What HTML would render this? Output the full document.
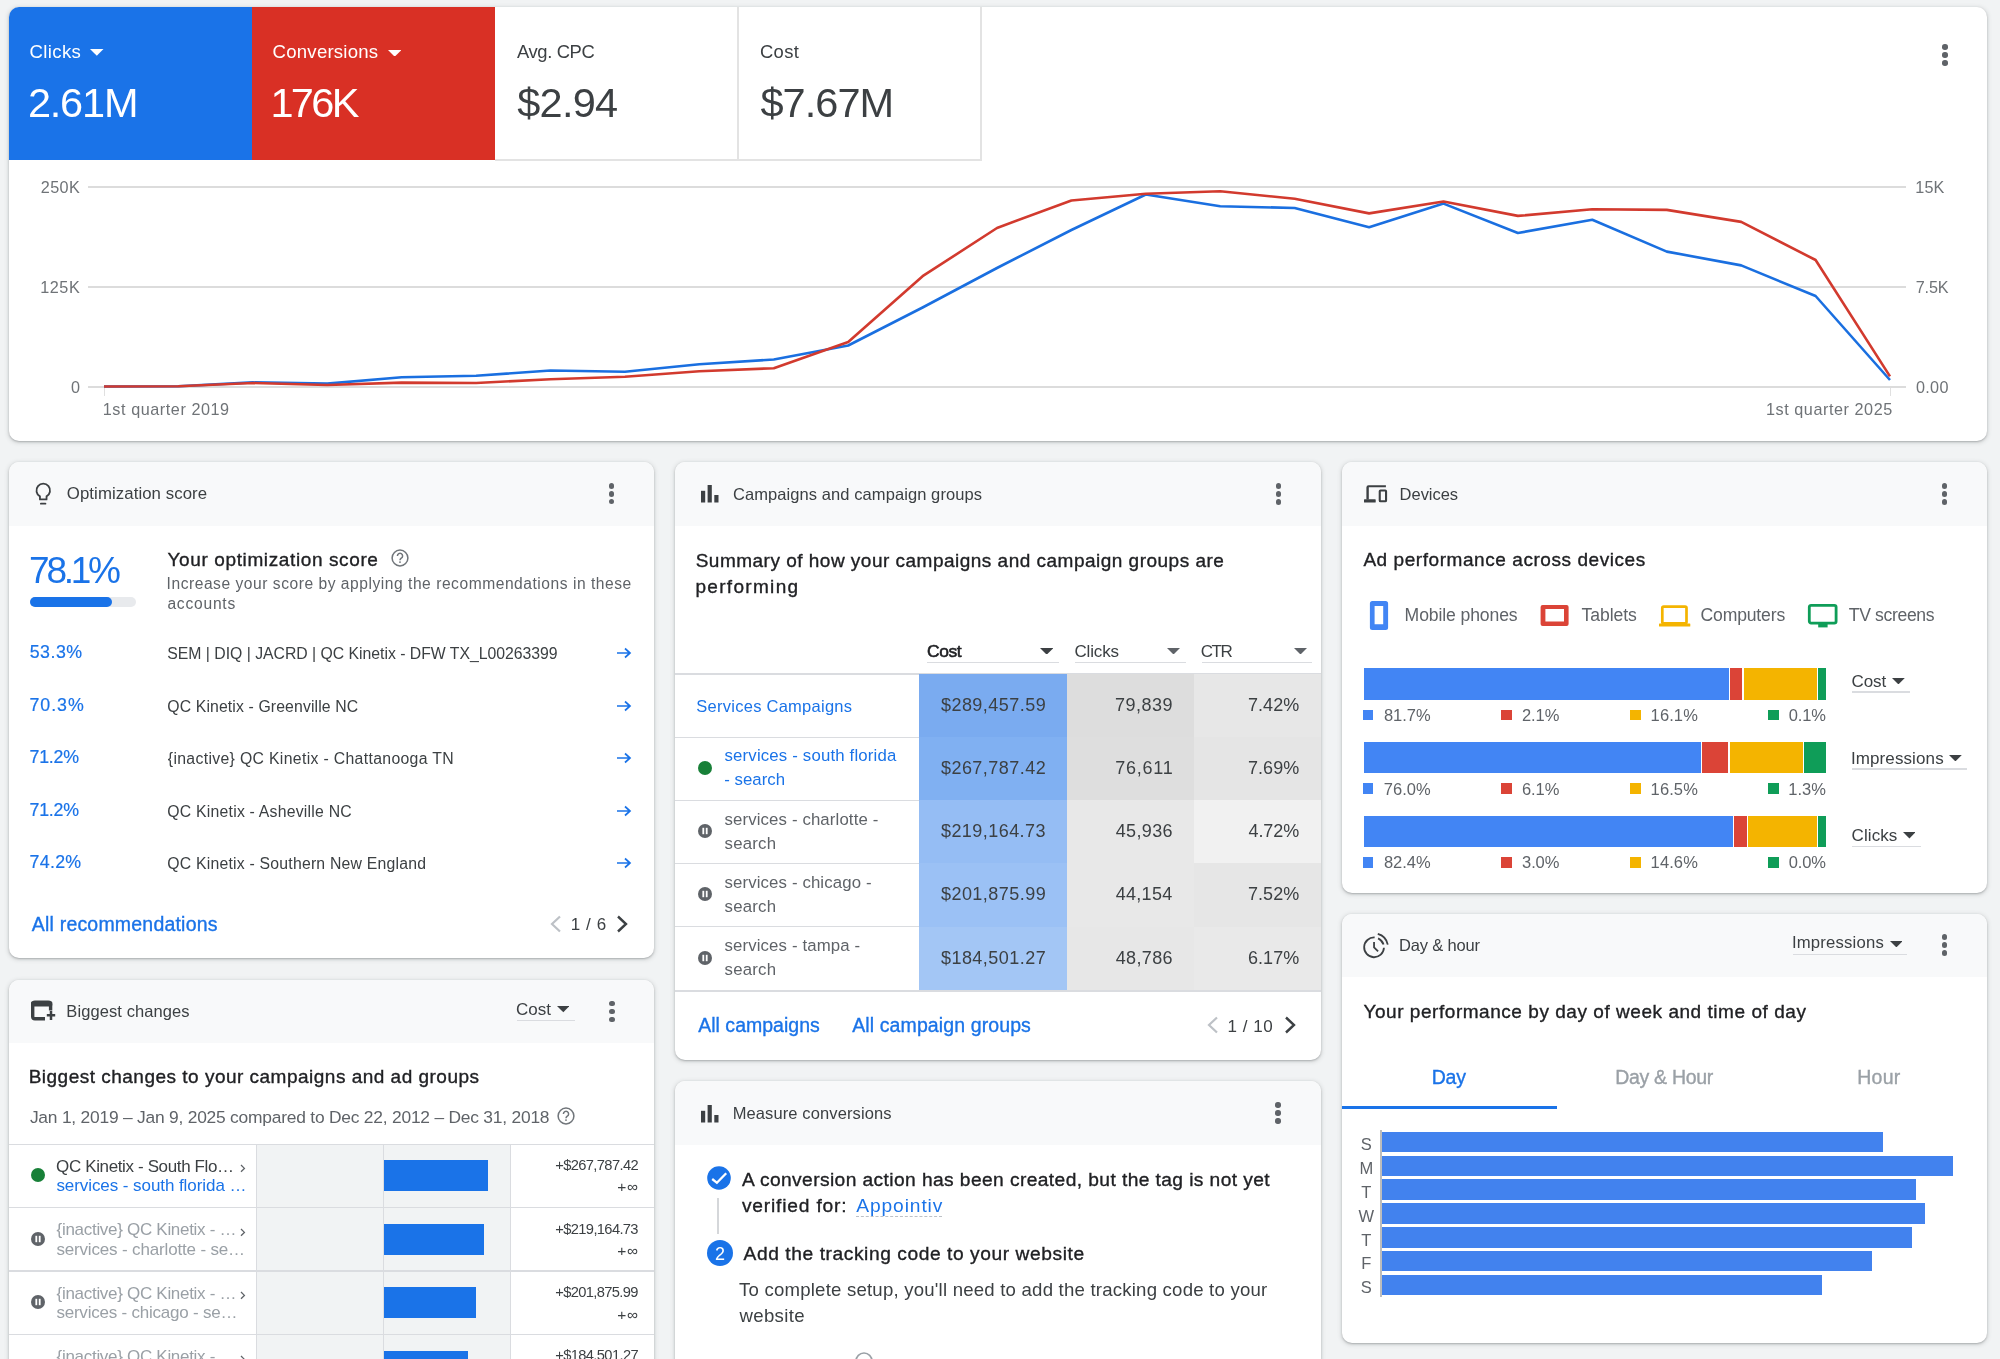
<!DOCTYPE html><html><head><meta charset="utf-8"><style>
html,body{margin:0;padding:0;width:2000px;height:1359px;overflow:hidden;background:#f1f3f4;font-family:'Liberation Sans', sans-serif}
.t{position:absolute;line-height:1;white-space:nowrap}
#tl{position:absolute;left:0;top:0;width:2000px;height:1359px;will-change:transform;pointer-events:none}
.r{position:absolute}
.card{position:absolute;background:#fff;border-radius:10px;box-shadow:0 1px 2px 0 rgba(60,64,67,.3),0 1px 4px 1px rgba(60,64,67,.15)}
</style></head><body>
<div class="card" style="left:9px;top:7px;width:1978px;height:434px;"></div>
<div class="r" style="left:9.0px;top:7.0px;width:243.0px;height:153.0px;background:#1a73e8;border-top-left-radius:10px"></div>
<div class="r" style="left:252.0px;top:7.0px;width:243.0px;height:153.0px;background:#d93025;"></div>
<div class="r" style="left:495.0px;top:159.0px;width:486.0px;height:1.5px;background:#e3e3e3;"></div>
<div class="r" style="left:737.0px;top:7.0px;width:1.5px;height:153.0px;background:#e3e3e3;"></div>
<div class="r" style="left:980.0px;top:7.0px;width:1.5px;height:153.5px;background:#e3e3e3;"></div>
<svg class="r" style="left:90.0px;top:49.0px" width="13.5" height="6.8" viewBox="0 0 13.5 6.8"><path d="M0 0H13.5L6.8 6.8Z" fill="#fff"/></svg>
<svg class="r" style="left:387.6px;top:49.5px" width="13.4" height="6.7" viewBox="0 0 13.4 6.7"><path d="M0 0H13.4L6.7 6.7Z" fill="#fff"/></svg>
<div class="r" style="left:1942.1px;top:44.2px;width:5.6px;height:5.6px;border-radius:50%;background:#5f6368"></div>
<div class="r" style="left:1942.1px;top:52.1px;width:5.6px;height:5.6px;border-radius:50%;background:#5f6368"></div>
<div class="r" style="left:1942.1px;top:60.0px;width:5.6px;height:5.6px;border-radius:50%;background:#5f6368"></div>
<div class="r" style="left:88.0px;top:186.4px;width:1818.0px;height:1.2px;background:#dcdcdc;"></div>
<div class="r" style="left:88.0px;top:286.4px;width:1818.0px;height:1.2px;background:#dcdcdc;"></div>
<div class="r" style="left:88.0px;top:386.4px;width:1818.0px;height:1.2px;background:#dcdcdc;"></div>
<div class="r" style="left:103.5px;top:388.0px;width:1.5px;height:8.0px;background:#e0e0e0;"></div>
<div class="r" style="left:1889.5px;top:388.0px;width:1.5px;height:8.0px;background:#e0e0e0;"></div>
<svg class="r" style="left:0.0px;top:0.0px" width="2000" height="450" viewBox="0 0 2000 450"><polyline points="104.0,386.5 178.4,386.3 252.8,382.4 327.2,383.6 401.7,377.3 476.1,375.8 550.5,370.5 624.9,371.8 699.3,364.2 773.8,359.5 848.2,345.5 922.6,307.5 997.0,268.0 1071.4,230.0 1145.8,194.5 1220.2,206.2 1294.7,208.0 1369.1,227.3 1443.5,203.6 1517.9,233.0 1592.3,219.8 1666.8,251.6 1741.2,265.4 1815.6,296.0 1890.0,380.0" fill="none" stroke="#1a6fe0" stroke-width="2.6" stroke-linejoin="round"/><polyline points="104.0,386.5 178.4,386.3 252.8,383.0 327.2,385.0 401.7,382.6 476.1,383.0 550.5,379.2 624.9,376.8 699.3,371.2 773.8,368.2 848.2,342.0 922.6,276.2 997.0,228.0 1071.4,200.5 1145.8,193.8 1220.2,191.2 1294.7,198.8 1369.1,213.4 1443.5,201.5 1517.9,215.9 1592.3,209.3 1666.8,209.9 1741.2,221.9 1815.6,260.0 1890.0,376.4" fill="none" stroke="#d23a2e" stroke-width="2.6" stroke-linejoin="round"/></svg>
<div class="card" style="left:9px;top:462px;width:645px;height:496px;"></div>
<div class="r" style="left:9px;top:462px;width:645px;height:64px;background:#f8f9fa;border-radius:10px 10px 0 0"></div>
<svg class="r" style="left:33.0px;top:482.0px" width="20" height="24" viewBox="0 0 20 24"><path d="M6.95 17.4V14.4A6.8 6.8 0 1 1 13.55 14.4V17.4Z" fill="none" stroke="#3c4043" stroke-width="1.8" stroke-linejoin="round"/><rect x="7" y="20.7" width="6.3" height="1.9" rx="0.9" fill="#3c4043"/></svg>
<div class="r" style="left:609.1px;top:483.3px;width:5.4px;height:5.4px;border-radius:50%;background:#5f6368"></div>
<div class="r" style="left:609.1px;top:491.2px;width:5.4px;height:5.4px;border-radius:50%;background:#5f6368"></div>
<div class="r" style="left:609.1px;top:499.1px;width:5.4px;height:5.4px;border-radius:50%;background:#5f6368"></div>
<div class="r" style="left:30.0px;top:597.0px;width:105.6px;height:10.4px;background:#e8eaed;border-radius:6px"></div>
<div class="r" style="left:30.0px;top:597.0px;width:82.4px;height:10.4px;background:#1a73e8;border-radius:6px"></div>
<svg class="r" style="left:390.5px;top:548.8px" width="18" height="18" viewBox="0 0 18 18"><circle cx="9" cy="9" r="7.9" fill="none" stroke="#70757a" stroke-width="1.5"/><path d="M6.4 6.9a2.6 2.6 0 1 1 3.9 2.3c-.8.6-1.3 1-1.3 2" fill="none" stroke="#70757a" stroke-width="1.5"/><circle cx="9" cy="13.1" r="0.95" fill="#70757a"/></svg>
<svg class="r" style="left:616.0px;top:647.2px" width="16" height="12" viewBox="0 0 16 12"><path d="M1 6H14M9 1.5L14 6L9 10.5" fill="none" stroke="#1a73e8" stroke-width="1.7"/></svg>
<svg class="r" style="left:616.0px;top:699.8px" width="16" height="12" viewBox="0 0 16 12"><path d="M1 6H14M9 1.5L14 6L9 10.5" fill="none" stroke="#1a73e8" stroke-width="1.7"/></svg>
<svg class="r" style="left:616.0px;top:752.3px" width="16" height="12" viewBox="0 0 16 12"><path d="M1 6H14M9 1.5L14 6L9 10.5" fill="none" stroke="#1a73e8" stroke-width="1.7"/></svg>
<svg class="r" style="left:616.0px;top:804.9px" width="16" height="12" viewBox="0 0 16 12"><path d="M1 6H14M9 1.5L14 6L9 10.5" fill="none" stroke="#1a73e8" stroke-width="1.7"/></svg>
<svg class="r" style="left:616.0px;top:857.4px" width="16" height="12" viewBox="0 0 16 12"><path d="M1 6H14M9 1.5L14 6L9 10.5" fill="none" stroke="#1a73e8" stroke-width="1.7"/></svg>
<svg class="r" style="left:549.0px;top:915.0px" width="13" height="18" viewBox="0 0 13 18"><path d="M11 1.5L3 9L11 16.5" fill="none" stroke="#bdc1c6" stroke-width="2.2"/></svg>
<svg class="r" style="left:616.0px;top:915.0px" width="13" height="18" viewBox="0 0 13 18"><path d="M2 1.5L10 9L2 16.5" fill="none" stroke="#3c4043" stroke-width="2.4"/></svg>
<div class="card" style="left:675px;top:462px;width:646px;height:598px;"></div>
<div class="r" style="left:675px;top:462px;width:646px;height:64px;background:#f8f9fa;border-radius:10px 10px 0 0"></div>
<svg class="r" style="left:701.0px;top:485.0px" width="20" height="20" viewBox="0 0 20 20"><rect x="0" y="5.8" width="4.2" height="11.7" fill="#3c4043"/><rect x="6.6" y="0" width="4.2" height="17.5" fill="#3c4043"/><rect x="13.3" y="10" width="4.2" height="7.5" fill="#3c4043"/></svg>
<div class="r" style="left:1275.7px;top:483.4px;width:5.4px;height:5.4px;border-radius:50%;background:#5f6368"></div>
<div class="r" style="left:1275.7px;top:491.3px;width:5.4px;height:5.4px;border-radius:50%;background:#5f6368"></div>
<div class="r" style="left:1275.7px;top:499.2px;width:5.4px;height:5.4px;border-radius:50%;background:#5f6368"></div>
<div class="r" style="left:927.4px;top:661.5px;width:131.2px;height:1.5px;background:#dadce0;"></div>
<svg class="r" style="left:1040.0px;top:647.6px" width="13.4" height="6.7" viewBox="0 0 13.4 6.7"><path d="M0 0H13.4L6.7 6.7Z" fill="#3c4043"/></svg>
<div class="r" style="left:1074.6px;top:661.5px;width:111.0px;height:1.5px;background:#dadce0;"></div>
<svg class="r" style="left:1167.0px;top:647.6px" width="13.0" height="6.5" viewBox="0 0 13.0 6.5"><path d="M0 0H13.0L6.5 6.5Z" fill="#5f6368"/></svg>
<div class="r" style="left:1201.6px;top:661.5px;width:110.4px;height:1.5px;background:#dadce0;"></div>
<svg class="r" style="left:1294.0px;top:647.6px" width="13.0" height="6.5" viewBox="0 0 13.0 6.5"><path d="M0 0H13.0L6.5 6.5Z" fill="#5f6368"/></svg>
<div class="r" style="left:675.0px;top:673.0px;width:646.0px;height:1.5px;background:#dadce0;"></div>
<div class="r" style="left:919.2px;top:674.0px;width:147.5px;height:63.2px;background:#7aabf0;"></div>
<div class="r" style="left:1066.7px;top:674.0px;width:127.0px;height:63.2px;background:#dddddd;"></div>
<div class="r" style="left:1193.7px;top:674.0px;width:127.3px;height:63.2px;background:#e7e7e7;"></div>
<div class="r" style="left:675.0px;top:736.5px;width:244.2px;height:1.4px;background:#dadce0;"></div>
<div class="r" style="left:919.2px;top:737.2px;width:147.5px;height:63.2px;background:#80b0f2;"></div>
<div class="r" style="left:1066.7px;top:737.2px;width:127.0px;height:63.2px;background:#dedede;"></div>
<div class="r" style="left:1193.7px;top:737.2px;width:127.3px;height:63.2px;background:#e5e5e5;"></div>
<div class="r" style="left:675.0px;top:799.7px;width:244.2px;height:1.4px;background:#dadce0;"></div>
<div class="r" style="left:919.2px;top:800.4px;width:147.5px;height:63.0px;background:#95bdf4;"></div>
<div class="r" style="left:1066.7px;top:800.4px;width:127.0px;height:63.0px;background:#e8e8e8;"></div>
<div class="r" style="left:1193.7px;top:800.4px;width:127.3px;height:63.0px;background:#f1f1f1;"></div>
<div class="r" style="left:675.0px;top:862.7px;width:244.2px;height:1.4px;background:#dadce0;"></div>
<div class="r" style="left:919.2px;top:863.4px;width:147.5px;height:63.2px;background:#9bc1f5;"></div>
<div class="r" style="left:1066.7px;top:863.4px;width:127.0px;height:63.2px;background:#e8e8e8;"></div>
<div class="r" style="left:1193.7px;top:863.4px;width:127.3px;height:63.2px;background:#e6e6e6;"></div>
<div class="r" style="left:675.0px;top:925.9px;width:244.2px;height:1.4px;background:#dadce0;"></div>
<div class="r" style="left:919.2px;top:926.6px;width:147.5px;height:64.0px;background:#a3c6f5;"></div>
<div class="r" style="left:1066.7px;top:926.6px;width:127.0px;height:64.0px;background:#e7e7e7;"></div>
<div class="r" style="left:1193.7px;top:926.6px;width:127.3px;height:64.0px;background:#e9e9e9;"></div>
<div class="r" style="left:675.0px;top:990.0px;width:646.0px;height:1.5px;background:#dadce0;"></div>
<div class="r" style="left:698.0px;top:761.0px;width:14px;height:14px;border-radius:50%;background:#188038"></div>
<svg class="r" style="left:698.0px;top:824.2px" width="14" height="14" viewBox="0 0 14 14"><circle cx="7.0" cy="7.0" r="7.0" fill="#5f6368"/><rect x="4.4" y="3.8" width="1.8" height="6.4" fill="#fff"/><rect x="7.8" y="3.8" width="1.8" height="6.4" fill="#fff"/></svg>
<svg class="r" style="left:698.0px;top:887.4px" width="14" height="14" viewBox="0 0 14 14"><circle cx="7.0" cy="7.0" r="7.0" fill="#5f6368"/><rect x="4.4" y="3.8" width="1.8" height="6.4" fill="#fff"/><rect x="7.8" y="3.8" width="1.8" height="6.4" fill="#fff"/></svg>
<svg class="r" style="left:698.0px;top:950.6px" width="14" height="14" viewBox="0 0 14 14"><circle cx="7.0" cy="7.0" r="7.0" fill="#5f6368"/><rect x="4.4" y="3.8" width="1.8" height="6.4" fill="#fff"/><rect x="7.8" y="3.8" width="1.8" height="6.4" fill="#fff"/></svg>
<svg class="r" style="left:1205.5px;top:1016.0px" width="13" height="18" viewBox="0 0 13 18"><path d="M11 1.5L3 9L11 16.5" fill="none" stroke="#bdc1c6" stroke-width="2.2"/></svg>
<svg class="r" style="left:1283.5px;top:1016.0px" width="13" height="18" viewBox="0 0 13 18"><path d="M2 1.5L10 9L2 16.5" fill="none" stroke="#3c4043" stroke-width="2.4"/></svg>
<div class="card" style="left:1342px;top:462px;width:645px;height:431px;"></div>
<div class="r" style="left:1342px;top:462px;width:645px;height:64px;background:#f8f9fa;border-radius:10px 10px 0 0"></div>
<svg class="r" style="left:1362.0px;top:483.0px" width="28" height="22" viewBox="0 0 28 22"><path d="M4.4 16.6V4.6Q4.4 2.2 6.6 2.2H23.9V4.3H6.8V16.6Z" fill="#3c4043"/><rect x="2" y="16.3" width="11.7" height="3.3" rx="0.6" fill="#3c4043"/><rect x="17.75" y="7.45" width="6.3" height="10.8" rx="0.8" fill="none" stroke="#3c4043" stroke-width="2.1"/></svg>
<div class="r" style="left:1941.9px;top:483.4px;width:5.4px;height:5.4px;border-radius:50%;background:#5f6368"></div>
<div class="r" style="left:1941.9px;top:491.3px;width:5.4px;height:5.4px;border-radius:50%;background:#5f6368"></div>
<div class="r" style="left:1941.9px;top:499.2px;width:5.4px;height:5.4px;border-radius:50%;background:#5f6368"></div>
<svg class="r" style="left:1369.0px;top:600.0px" width="21" height="31" viewBox="0 0 21 31"><path fill-rule="evenodd" fill="#4285f4" d="M3.4 1H16.6A2.5 2.5 0 0 1 19.1 3.5V27.4A2.5 2.5 0 0 1 16.6 29.9H3.4A2.5 2.5 0 0 1 0.9 27.4V3.5A2.5 2.5 0 0 1 3.4 1ZM5.6 6V24.2H14.2V6Z"/></svg>
<svg class="r" style="left:1540.0px;top:604.0px" width="30" height="23" viewBox="0 0 30 23"><path fill-rule="evenodd" fill="#db4437" d="M2.6 0.9H26.6A2 2 0 0 1 28.6 2.9V20A2 2 0 0 1 26.6 22H2.6A2 2 0 0 1 0.6 20V2.9A2 2 0 0 1 2.6 0.9ZM5.4 5V17.4H24V5Z"/></svg>
<svg class="r" style="left:1658.0px;top:603.5px" width="33" height="24" viewBox="0 0 33 24"><rect x="4.3" y="2.7" width="24.2" height="16.6" rx="1.4" fill="none" stroke="#f4b400" stroke-width="2.7"/><rect x="1" y="19.5" width="31.3" height="3" rx="0.5" fill="#f4b400"/></svg>
<svg class="r" style="left:1806.5px;top:603.0px" width="32" height="26" viewBox="0 0 32 26"><rect x="2.3" y="2.3" width="26.8" height="17.8" rx="1.8" fill="none" stroke="#0f9d58" stroke-width="2.8"/><rect x="11.2" y="21" width="9.4" height="3.4" fill="#0f9d58"/></svg>
<div class="r" style="left:1364.4px;top:668.2px;width:364.2px;height:31.4px;background:#4285f4;"></div>
<div class="r" style="left:1730.2px;top:668.2px;width:12.1px;height:31.4px;background:#db4437;"></div>
<div class="r" style="left:1743.9px;top:668.2px;width:72.7px;height:31.4px;background:#f4b400;"></div>
<div class="r" style="left:1818.2px;top:668.2px;width:7.6px;height:31.4px;background:#0f9d58;"></div>
<div class="r" style="left:1362.8px;top:709.8px;width:10.6px;height:10.6px;background:#4285f4;"></div>
<div class="r" style="left:1501.4px;top:709.8px;width:10.6px;height:10.6px;background:#db4437;"></div>
<div class="r" style="left:1630.0px;top:709.8px;width:10.6px;height:10.6px;background:#f4b400;"></div>
<div class="r" style="left:1768.2px;top:709.8px;width:10.6px;height:10.6px;background:#0f9d58;"></div>
<div class="r" style="left:1364.4px;top:742.2px;width:336.3px;height:31.3px;background:#4285f4;"></div>
<div class="r" style="left:1702.3px;top:742.2px;width:25.9px;height:31.3px;background:#db4437;"></div>
<div class="r" style="left:1729.8px;top:742.2px;width:73.0px;height:31.3px;background:#f4b400;"></div>
<div class="r" style="left:1804.4px;top:742.2px;width:21.4px;height:31.3px;background:#0f9d58;"></div>
<div class="r" style="left:1362.8px;top:783.4px;width:10.6px;height:10.6px;background:#4285f4;"></div>
<div class="r" style="left:1501.4px;top:783.4px;width:10.6px;height:10.6px;background:#db4437;"></div>
<div class="r" style="left:1630.0px;top:783.4px;width:10.6px;height:10.6px;background:#f4b400;"></div>
<div class="r" style="left:1768.2px;top:783.4px;width:10.6px;height:10.6px;background:#0f9d58;"></div>
<div class="r" style="left:1364.4px;top:815.8px;width:368.3px;height:31.3px;background:#4285f4;"></div>
<div class="r" style="left:1734.3px;top:815.8px;width:12.5px;height:31.3px;background:#db4437;"></div>
<div class="r" style="left:1748.4px;top:815.8px;width:68.2px;height:31.3px;background:#f4b400;"></div>
<div class="r" style="left:1818.2px;top:815.8px;width:7.6px;height:31.3px;background:#0f9d58;"></div>
<div class="r" style="left:1362.8px;top:857.0px;width:10.6px;height:10.6px;background:#4285f4;"></div>
<div class="r" style="left:1501.4px;top:857.0px;width:10.6px;height:10.6px;background:#db4437;"></div>
<div class="r" style="left:1630.0px;top:857.0px;width:10.6px;height:10.6px;background:#f4b400;"></div>
<div class="r" style="left:1768.2px;top:857.0px;width:10.6px;height:10.6px;background:#0f9d58;"></div>
<svg class="r" style="left:1891.8px;top:678.0px" width="12.8" height="6.4" viewBox="0 0 12.8 6.4"><path d="M0 0H12.8L6.4 6.4Z" fill="#3c4043"/></svg>
<div class="r" style="left:1852.4px;top:691.4px;width:57.6px;height:1.4px;background:#dadce0;"></div>
<svg class="r" style="left:1949.4px;top:754.8px" width="12.8" height="6.4" viewBox="0 0 12.8 6.4"><path d="M0 0H12.8L6.4 6.4Z" fill="#3c4043"/></svg>
<div class="r" style="left:1852.4px;top:768.2px;width:114.6px;height:1.4px;background:#dadce0;"></div>
<svg class="r" style="left:1902.6px;top:832.2px" width="12.8" height="6.4" viewBox="0 0 12.8 6.4"><path d="M0 0H12.8L6.4 6.4Z" fill="#3c4043"/></svg>
<div class="r" style="left:1852.4px;top:845.6px;width:68.2px;height:1.4px;background:#dadce0;"></div>
<div class="card" style="left:1342px;top:914px;width:645px;height:429px;"></div>
<div class="r" style="left:1342px;top:914px;width:645px;height:63px;background:#f8f9fa;border-radius:10px 10px 0 0"></div>
<svg class="r" style="left:1360.0px;top:930.0px" width="32" height="32" viewBox="0 0 32 32"><path d="M14.64 7.47A9.9 9.9 0 1 0 23.94 17.80" fill="none" stroke="#3c4043" stroke-width="1.8"/><path d="M18.08 8.31A9.9 9.9 0 0 1 23.53 14.49" fill="none" stroke="#3c4043" stroke-width="1.8"/><path d="M17.77 3.85A14.0 14.0 0 0 1 27.77 14.56" fill="none" stroke="#3c4043" stroke-width="1.8"/><path d="M14.05 12.10V17.35L18.10 21.40" fill="none" stroke="#3c4043" stroke-width="1.8"/></svg>
<svg class="r" style="left:1889.6px;top:940.6px" width="12.8" height="6.4" viewBox="0 0 12.8 6.4"><path d="M0 0H12.8L6.4 6.4Z" fill="#3c4043"/></svg>
<div class="r" style="left:1793.4px;top:953.5px;width:114.1px;height:1.5px;background:#dadce0;"></div>
<div class="r" style="left:1942.0px;top:934.4px;width:5.4px;height:5.4px;border-radius:50%;background:#5f6368"></div>
<div class="r" style="left:1942.0px;top:942.3px;width:5.4px;height:5.4px;border-radius:50%;background:#5f6368"></div>
<div class="r" style="left:1942.0px;top:950.2px;width:5.4px;height:5.4px;border-radius:50%;background:#5f6368"></div>
<div class="r" style="left:1342.0px;top:1106.0px;width:214.5px;height:3.0px;background:#1a73e8;"></div>
<div class="r" style="left:1380.2px;top:1130.0px;width:1.6px;height:167.0px;background:#bdbdbd;"></div>
<div class="r" style="left:1382.0px;top:1131.7px;width:500.5px;height:20.6px;background:#4282ee;"></div>
<div class="r" style="left:1382.0px;top:1155.7px;width:570.8px;height:20.6px;background:#4282ee;"></div>
<div class="r" style="left:1382.0px;top:1179.3px;width:533.6px;height:20.6px;background:#4282ee;"></div>
<div class="r" style="left:1382.0px;top:1203.3px;width:543.0px;height:20.6px;background:#4282ee;"></div>
<div class="r" style="left:1382.0px;top:1227.0px;width:529.7px;height:20.6px;background:#4282ee;"></div>
<div class="r" style="left:1382.0px;top:1250.6px;width:490.1px;height:20.6px;background:#4282ee;"></div>
<div class="r" style="left:1382.0px;top:1274.6px;width:439.9px;height:20.6px;background:#4282ee;"></div>
<div class="card" style="left:9px;top:980px;width:645px;height:440px;"></div>
<div class="r" style="left:9px;top:980px;width:645px;height:63px;background:#f8f9fa;border-radius:10px 10px 0 0"></div>
<svg class="r" style="left:30.0px;top:1000.0px" width="27" height="23" viewBox="0 0 27 23"><path d="M44 0" /><path d="M2.7 4.5Q2.7 2.2 5 2.2H18.3Q20.6 2.2 20.6 4.5V10.6" fill="none" stroke="#3c4043" stroke-width="3.4"/><rect x="1" y="1.4" width="21.3" height="5" rx="1.4" fill="#3c4043"/><path d="M2.7 4V16.5Q2.7 18.7 5 18.7H15" fill="none" stroke="#3c4043" stroke-width="3.4"/><path d="M16.8 15.3H25.2M21 11.1V19.9" fill="none" stroke="#3c4043" stroke-width="2.5"/></svg>
<svg class="r" style="left:556.9px;top:1006.4px" width="12.6" height="6.3" viewBox="0 0 12.6 6.3"><path d="M0 0H12.6L6.3 6.3Z" fill="#3c4043"/></svg>
<div class="r" style="left:516.8px;top:1019.8px;width:58.0px;height:1.4px;background:#dadce0;"></div>
<div class="r" style="left:609.3px;top:1000.9px;width:5.4px;height:5.4px;border-radius:50%;background:#5f6368"></div>
<div class="r" style="left:609.3px;top:1008.8px;width:5.4px;height:5.4px;border-radius:50%;background:#5f6368"></div>
<div class="r" style="left:609.3px;top:1016.7px;width:5.4px;height:5.4px;border-radius:50%;background:#5f6368"></div>
<svg class="r" style="left:557.0px;top:1107.0px" width="18" height="18" viewBox="0 0 18 18"><circle cx="9" cy="9" r="7.9" fill="none" stroke="#70757a" stroke-width="1.5"/><path d="M6.4 6.9a2.6 2.6 0 1 1 3.9 2.3c-.8.6-1.3 1-1.3 2" fill="none" stroke="#70757a" stroke-width="1.5"/><circle cx="9" cy="13.1" r="0.95" fill="#70757a"/></svg>
<div class="r" style="left:9.0px;top:1143.5px;width:645.0px;height:1.5px;background:#dadce0;"></div>
<div class="r" style="left:256.4px;top:1145.0px;width:253.9px;height:214.0px;background:#f1f3f4;"></div>
<div class="r" style="left:383.0px;top:1145.0px;width:1.3px;height:214.0px;background:#dadce0;"></div>
<div class="r" style="left:256.0px;top:1145.0px;width:1.3px;height:214.0px;background:#dadce0;"></div>
<div class="r" style="left:509.7px;top:1145.0px;width:1.3px;height:214.0px;background:#dadce0;"></div>
<div class="r" style="left:9.0px;top:1206.8px;width:645.0px;height:1.4px;background:#dadce0;"></div>
<div class="r" style="left:31.3px;top:1168.2px;width:14px;height:14px;border-radius:50%;background:#188038"></div>
<svg class="r" style="left:240.0px;top:1164.0px" width="6" height="9" viewBox="0 0 6 9"><path d="M1 1L4.4 4.4L1 7.8" fill="none" stroke="#5f6368" stroke-width="1.3"/></svg>
<div class="r" style="left:384.3px;top:1160.2px;width:104.2px;height:31.2px;background:#1a73e8;"></div>
<div class="r" style="left:9.0px;top:1270.3px;width:645.0px;height:1.4px;background:#dadce0;"></div>
<svg class="r" style="left:31.3px;top:1231.7px" width="14" height="14" viewBox="0 0 14 14"><circle cx="7.0" cy="7.0" r="7.0" fill="#5f6368"/><rect x="4.4" y="3.8" width="1.8" height="6.4" fill="#fff"/><rect x="7.8" y="3.8" width="1.8" height="6.4" fill="#fff"/></svg>
<svg class="r" style="left:240.0px;top:1227.5px" width="6" height="9" viewBox="0 0 6 9"><path d="M1 1L4.4 4.4L1 7.8" fill="none" stroke="#5f6368" stroke-width="1.3"/></svg>
<div class="r" style="left:384.3px;top:1223.7px;width:99.6px;height:31.2px;background:#1a73e8;"></div>
<div class="r" style="left:9.0px;top:1333.8px;width:645.0px;height:1.4px;background:#dadce0;"></div>
<svg class="r" style="left:31.3px;top:1295.2px" width="14" height="14" viewBox="0 0 14 14"><circle cx="7.0" cy="7.0" r="7.0" fill="#5f6368"/><rect x="4.4" y="3.8" width="1.8" height="6.4" fill="#fff"/><rect x="7.8" y="3.8" width="1.8" height="6.4" fill="#fff"/></svg>
<svg class="r" style="left:240.0px;top:1291.0px" width="6" height="9" viewBox="0 0 6 9"><path d="M1 1L4.4 4.4L1 7.8" fill="none" stroke="#5f6368" stroke-width="1.3"/></svg>
<div class="r" style="left:384.3px;top:1287.2px;width:91.8px;height:31.2px;background:#1a73e8;"></div>
<svg class="r" style="left:31.3px;top:1358.7px" width="14" height="14" viewBox="0 0 14 14"><circle cx="7.0" cy="7.0" r="7.0" fill="#5f6368"/><rect x="4.4" y="3.8" width="1.8" height="6.4" fill="#fff"/><rect x="7.8" y="3.8" width="1.8" height="6.4" fill="#fff"/></svg>
<svg class="r" style="left:240.0px;top:1354.5px" width="6" height="9" viewBox="0 0 6 9"><path d="M1 1L4.4 4.4L1 7.8" fill="none" stroke="#5f6368" stroke-width="1.3"/></svg>
<div class="r" style="left:384.3px;top:1350.7px;width:83.7px;height:31.2px;background:#1a73e8;"></div>
<div class="card" style="left:675px;top:1081px;width:646px;height:339px;"></div>
<div class="r" style="left:675px;top:1081px;width:646px;height:64px;background:#f8f9fa;border-radius:10px 10px 0 0"></div>
<svg class="r" style="left:701.0px;top:1104.5px" width="20" height="20" viewBox="0 0 20 20"><rect x="0" y="5.8" width="4.2" height="11.7" fill="#3c4043"/><rect x="6.6" y="0" width="4.2" height="17.5" fill="#3c4043"/><rect x="13.3" y="10" width="4.2" height="7.5" fill="#3c4043"/></svg>
<div class="r" style="left:1275.3px;top:1102.4px;width:5.4px;height:5.4px;border-radius:50%;background:#5f6368"></div>
<div class="r" style="left:1275.3px;top:1110.3px;width:5.4px;height:5.4px;border-radius:50%;background:#5f6368"></div>
<div class="r" style="left:1275.3px;top:1118.2px;width:5.4px;height:5.4px;border-radius:50%;background:#5f6368"></div>
<svg class="r" style="left:707.0px;top:1166.0px" width="24" height="24" viewBox="0 0 24 24"><circle cx="12" cy="12" r="11.8" fill="#1a73e8"/><path d="M5.2 13L9.9 16.8L19.2 7.3" fill="none" stroke="#fff" stroke-width="2.3"/></svg>
<div class="r" style="left:856.3px;top:1215.5px;width:86px;height:0;border-top:1.6px dashed #bdc1c6"></div>
<div class="r" style="left:717.4px;top:1198.3px;width:1.2px;height:35.4px;background:#d5d7da;"></div>
<svg class="r" style="left:707.0px;top:1240.0px" width="26" height="26" viewBox="0 0 26 26"><circle cx="13" cy="13" r="13" fill="#1a73e8"/></svg>
<svg class="r" style="left:854.0px;top:1350.0px" width="20" height="12" viewBox="0 0 20 12"><path d="M2 11A8 8 0 0 1 18 11" fill="none" stroke="#9aa0a6" stroke-width="1.6"/></svg>
<div id="tl">
<div class="t" style="left:29.6px;top:42.7px;font-size:18.6px;color:#fff;font-weight:normal;letter-spacing:0.34px;">Clicks</div>
<div class="t" style="left:272.6px;top:42.7px;font-size:18.6px;color:#fff;font-weight:normal;letter-spacing:0.22px;">Conversions</div>
<div class="t" style="left:517.0px;top:42.9px;font-size:18.4px;color:#3c4043;font-weight:normal;letter-spacing:-0.39px;">Avg. CPC</div>
<div class="t" style="left:759.9px;top:42.9px;font-size:18.4px;color:#3c4043;font-weight:normal;letter-spacing:0.40px;">Cost</div>
<div class="t" style="left:27.9px;top:82.2px;font-size:41.5px;color:#fff;font-weight:normal;letter-spacing:-1.19px;">2.61M</div>
<div class="t" style="left:270.4px;top:82.2px;font-size:41.5px;color:#fff;font-weight:normal;letter-spacing:-2.66px;">176K</div>
<div class="t" style="left:517.3px;top:82.2px;font-size:41.5px;color:#3c4043;font-weight:normal;letter-spacing:-0.77px;">$2.94</div>
<div class="t" style="left:760.4px;top:82.2px;font-size:41.5px;color:#3c4043;font-weight:normal;letter-spacing:-0.93px;">$7.67M</div>
<div class="t" style="right:1919.9px;top:178.7px;font-size:16.2px;color:#6f7377;font-weight:normal;text-align:right;letter-spacing:0.38px;">250K</div>
<div class="t" style="left:1915.3px;top:178.7px;font-size:16.2px;color:#6f7377;font-weight:normal;letter-spacing:0.11px;">15K</div>
<div class="t" style="right:1919.8px;top:278.7px;font-size:16.2px;color:#6f7377;font-weight:normal;text-align:right;letter-spacing:0.52px;">125K</div>
<div class="t" style="left:1915.7px;top:278.7px;font-size:16.2px;color:#6f7377;font-weight:normal;letter-spacing:-0.11px;">7.5K</div>
<div class="t" style="right:1919.9px;top:378.7px;font-size:16.2px;color:#6f7377;font-weight:normal;text-align:right;">0</div>
<div class="t" style="left:1915.9px;top:378.7px;font-size:16.2px;color:#6f7377;font-weight:normal;letter-spacing:0.34px;">0.00</div>
<div class="t" style="left:102.8px;top:400.7px;font-size:16.2px;color:#6f7377;font-weight:normal;letter-spacing:0.56px;">1st quarter 2019</div>
<div class="t" style="right:107.2px;top:400.7px;font-size:16.2px;color:#6f7377;font-weight:normal;text-align:right;letter-spacing:0.56px;">1st quarter 2025</div>
<div class="t" style="left:66.8px;top:486.2px;font-size:16.8px;color:#3c4043;font-weight:normal;letter-spacing:0.08px;">Optimization score</div>
<div class="t" style="left:29.1px;top:552.0px;font-size:37px;color:#1a73e8;font-weight:normal;letter-spacing:-3.29px;">78.1%</div>
<div class="t" style="left:167.5px;top:550.4px;font-size:19px;color:#202124;font-weight:normal;letter-spacing:0.62px;-webkit-text-stroke:0.35px #202124;">Your optimization score</div>
<div class="t" style="left:166.6px;top:576.2px;font-size:15.6px;color:#5f6368;font-weight:normal;letter-spacing:0.53px;">Increase your score by applying the recommendations in these</div>
<div class="t" style="left:167.4px;top:596.2px;font-size:15.6px;color:#5f6368;font-weight:normal;letter-spacing:0.78px;">accounts</div>
<div class="t" style="left:29.7px;top:644.4px;font-size:17.8px;color:#1a73e8;font-weight:normal;letter-spacing:0.52px;-webkit-text-stroke:0.2px #1a73e8;">53.3%</div>
<div class="t" style="left:167.3px;top:646.1px;font-size:15.8px;color:#3c4043;font-weight:normal;letter-spacing:-0.02px;">SEM | DIQ | JACRD | QC Kinetix - DFW TX_L00263399</div>
<div class="t" style="left:29.5px;top:697.4px;font-size:17.8px;color:#1a73e8;font-weight:normal;letter-spacing:0.96px;-webkit-text-stroke:0.2px #1a73e8;">70.3%</div>
<div class="t" style="left:167.3px;top:699.1px;font-size:15.8px;color:#3c4043;font-weight:normal;letter-spacing:0.12px;">QC Kinetix - Greenville NC</div>
<div class="t" style="left:29.5px;top:749.4px;font-size:17.8px;color:#1a73e8;font-weight:normal;letter-spacing:-0.24px;-webkit-text-stroke:0.2px #1a73e8;">71.2%</div>
<div class="t" style="left:167.8px;top:751.1px;font-size:15.8px;color:#3c4043;font-weight:normal;letter-spacing:0.33px;">{inactive} QC Kinetix - Chattanooga TN</div>
<div class="t" style="left:29.5px;top:802.4px;font-size:17.8px;color:#1a73e8;font-weight:normal;letter-spacing:-0.24px;-webkit-text-stroke:0.2px #1a73e8;">71.2%</div>
<div class="t" style="left:167.3px;top:804.1px;font-size:15.8px;color:#3c4043;font-weight:normal;letter-spacing:0.22px;">QC Kinetix - Asheville NC</div>
<div class="t" style="left:29.5px;top:854.4px;font-size:17.8px;color:#1a73e8;font-weight:normal;letter-spacing:0.31px;-webkit-text-stroke:0.2px #1a73e8;">74.2%</div>
<div class="t" style="left:167.3px;top:856.1px;font-size:15.8px;color:#3c4043;font-weight:normal;letter-spacing:0.21px;">QC Kinetix - Southern New England</div>
<div class="t" style="left:31.8px;top:914.9px;font-size:19.5px;color:#1a73e8;font-weight:normal;letter-spacing:0.20px;-webkit-text-stroke:0.35px #1a73e8;">All recommendations</div>
<div class="t" style="left:570.7px;top:916.0px;font-size:17px;color:#3c4043;font-weight:normal;letter-spacing:0.62px;">1 / 6</div>
<div class="t" style="left:733.0px;top:485.5px;font-size:16.5px;color:#3c4043;font-weight:normal;letter-spacing:0.08px;">Campaigns and campaign groups</div>
<div class="t" style="left:695.7px;top:551.4px;font-size:19px;color:#202124;font-weight:normal;letter-spacing:0.49px;-webkit-text-stroke:0.35px #202124;">Summary of how your campaigns and campaign groups are</div>
<div class="t" style="left:695.4px;top:577.4px;font-size:19px;color:#202124;font-weight:normal;letter-spacing:1.32px;-webkit-text-stroke:0.35px #202124;">performing</div>
<div class="t" style="left:927.1px;top:642.7px;font-size:17.4px;color:#202124;font-weight:normal;letter-spacing:-0.40px;-webkit-text-stroke:0.6px #202124;">Cost</div>
<div class="t" style="left:1074.4px;top:643.0px;font-size:17px;color:#3c4043;font-weight:normal;letter-spacing:-0.13px;">Clicks</div>
<div class="t" style="left:1200.8px;top:643.0px;font-size:17px;color:#3c4043;font-weight:normal;letter-spacing:-1.46px;">CTR</div>
<div class="t" style="right:953.9px;top:696.2px;font-size:18px;color:#3c4043;font-weight:normal;text-align:right;letter-spacing:0.46px;">$289,457.59</div>
<div class="t" style="right:826.9px;top:696.2px;font-size:18px;color:#3c4043;font-weight:normal;text-align:right;letter-spacing:0.49px;">79,839</div>
<div class="t" style="right:700.7px;top:696.2px;font-size:18px;color:#3c4043;font-weight:normal;text-align:right;letter-spacing:0.07px;">7.42%</div>
<div class="t" style="right:953.8px;top:759.2px;font-size:18px;color:#3c4043;font-weight:normal;text-align:right;letter-spacing:0.47px;">$267,787.42</div>
<div class="t" style="right:826.6px;top:759.2px;font-size:18px;color:#3c4043;font-weight:normal;text-align:right;letter-spacing:0.76px;">76,611</div>
<div class="t" style="right:700.7px;top:759.2px;font-size:18px;color:#3c4043;font-weight:normal;text-align:right;letter-spacing:0.07px;">7.69%</div>
<div class="t" style="right:954.0px;top:822.2px;font-size:18px;color:#3c4043;font-weight:normal;text-align:right;letter-spacing:0.45px;">$219,164.73</div>
<div class="t" style="right:827.1px;top:822.2px;font-size:18px;color:#3c4043;font-weight:normal;text-align:right;letter-spacing:0.36px;">45,936</div>
<div class="t" style="right:700.8px;top:822.2px;font-size:18px;color:#3c4043;font-weight:normal;text-align:right;letter-spacing:-0.06px;">4.72%</div>
<div class="t" style="right:953.9px;top:885.2px;font-size:18px;color:#3c4043;font-weight:normal;text-align:right;letter-spacing:0.46px;">$201,875.99</div>
<div class="t" style="right:827.4px;top:885.2px;font-size:18px;color:#3c4043;font-weight:normal;text-align:right;letter-spacing:0.32px;">44,154</div>
<div class="t" style="right:700.7px;top:885.2px;font-size:18px;color:#3c4043;font-weight:normal;text-align:right;letter-spacing:0.07px;">7.52%</div>
<div class="t" style="right:953.8px;top:949.2px;font-size:18px;color:#3c4043;font-weight:normal;text-align:right;letter-spacing:0.47px;">$184,501.27</div>
<div class="t" style="right:827.1px;top:949.2px;font-size:18px;color:#3c4043;font-weight:normal;text-align:right;letter-spacing:0.36px;">48,786</div>
<div class="t" style="right:700.7px;top:949.2px;font-size:18px;color:#3c4043;font-weight:normal;text-align:right;letter-spacing:0.07px;">6.17%</div>
<div class="t" style="left:696.3px;top:697.5px;font-size:16.5px;color:#1a73e8;font-weight:normal;letter-spacing:0.26px;">Services Campaigns</div>
<div class="t" style="left:724.5px;top:748.2px;font-size:16.8px;color:#1a73e8;font-weight:normal;letter-spacing:0.17px;">services - south florida</div>
<div class="t" style="left:724.2px;top:772.2px;font-size:16.8px;color:#1a73e8;font-weight:normal;letter-spacing:0.04px;">- search</div>
<div class="t" style="left:724.5px;top:812.2px;font-size:16.8px;color:#5f6368;font-weight:normal;letter-spacing:0.13px;">services - charlotte -</div>
<div class="t" style="left:724.5px;top:836.2px;font-size:16.8px;color:#5f6368;font-weight:normal;letter-spacing:0.24px;">search</div>
<div class="t" style="left:724.5px;top:875.2px;font-size:16.8px;color:#5f6368;font-weight:normal;letter-spacing:0.13px;">services - chicago -</div>
<div class="t" style="left:724.5px;top:899.2px;font-size:16.8px;color:#5f6368;font-weight:normal;letter-spacing:0.24px;">search</div>
<div class="t" style="left:724.5px;top:938.2px;font-size:16.8px;color:#5f6368;font-weight:normal;letter-spacing:0.13px;">services - tampa -</div>
<div class="t" style="left:724.5px;top:962.2px;font-size:16.8px;color:#5f6368;font-weight:normal;letter-spacing:0.24px;">search</div>
<div class="t" style="left:698.2px;top:1015.9px;font-size:19.5px;color:#1a73e8;font-weight:normal;letter-spacing:0.02px;-webkit-text-stroke:0.35px #1a73e8;">All campaigns</div>
<div class="t" style="left:852.2px;top:1015.9px;font-size:19.5px;color:#1a73e8;font-weight:normal;letter-spacing:0.11px;-webkit-text-stroke:0.35px #1a73e8;">All campaign groups</div>
<div class="t" style="left:1227.5px;top:1018.0px;font-size:17px;color:#3c4043;font-weight:normal;letter-spacing:0.51px;">1 / 10</div>
<div class="t" style="left:1399.6px;top:485.5px;font-size:16.5px;color:#3c4043;font-weight:normal;letter-spacing:-0.03px;">Devices</div>
<div class="t" style="left:1363.4px;top:550.4px;font-size:19px;color:#202124;font-weight:normal;letter-spacing:0.56px;-webkit-text-stroke:0.35px #202124;">Ad performance across devices</div>
<div class="t" style="left:1404.6px;top:606.5px;font-size:17.6px;color:#5f6368;font-weight:normal;letter-spacing:-0.12px;">Mobile phones</div>
<div class="t" style="left:1581.6px;top:606.5px;font-size:17.6px;color:#5f6368;font-weight:normal;letter-spacing:-0.07px;">Tablets</div>
<div class="t" style="left:1700.5px;top:606.5px;font-size:17.6px;color:#5f6368;font-weight:normal;letter-spacing:-0.17px;">Computers</div>
<div class="t" style="left:1848.8px;top:606.5px;font-size:17.6px;color:#5f6368;font-weight:normal;letter-spacing:-0.36px;">TV screens</div>
<div class="t" style="left:1383.9px;top:706.5px;font-size:16.5px;color:#5f6368;font-weight:normal;letter-spacing:-0.01px;">81.7%</div>
<div class="t" style="left:1522.0px;top:706.5px;font-size:16.5px;color:#5f6368;font-weight:normal;letter-spacing:-0.07px;">2.1%</div>
<div class="t" style="left:1650.6px;top:706.5px;font-size:16.5px;color:#5f6368;font-weight:normal;letter-spacing:0.11px;">16.1%</div>
<div class="t" style="left:1788.7px;top:706.5px;font-size:16.5px;color:#5f6368;font-weight:normal;letter-spacing:-0.13px;">0.1%</div>
<div class="t" style="left:1383.8px;top:780.5px;font-size:16.5px;color:#5f6368;font-weight:normal;">76.0%</div>
<div class="t" style="left:1522.0px;top:780.5px;font-size:16.5px;color:#5f6368;font-weight:normal;letter-spacing:-0.07px;">6.1%</div>
<div class="t" style="left:1650.6px;top:780.5px;font-size:16.5px;color:#5f6368;font-weight:normal;letter-spacing:0.11px;">16.5%</div>
<div class="t" style="left:1788.2px;top:780.5px;font-size:16.5px;color:#5f6368;font-weight:normal;letter-spacing:0.07px;">1.3%</div>
<div class="t" style="left:1383.9px;top:853.5px;font-size:16.5px;color:#5f6368;font-weight:normal;letter-spacing:-0.01px;">82.4%</div>
<div class="t" style="left:1522.1px;top:853.5px;font-size:16.5px;color:#5f6368;font-weight:normal;letter-spacing:-0.13px;">3.0%</div>
<div class="t" style="left:1650.6px;top:853.5px;font-size:16.5px;color:#5f6368;font-weight:normal;letter-spacing:0.11px;">14.6%</div>
<div class="t" style="left:1788.7px;top:853.5px;font-size:16.5px;color:#5f6368;font-weight:normal;letter-spacing:-0.13px;">0.0%</div>
<div class="t" style="left:1851.6px;top:673.0px;font-size:17px;color:#3c4043;font-weight:normal;letter-spacing:-0.13px;">Cost</div>
<div class="t" style="left:1850.9px;top:750.0px;font-size:17px;color:#3c4043;font-weight:normal;letter-spacing:0.11px;">Impressions</div>
<div class="t" style="left:1851.6px;top:827.0px;font-size:17px;color:#3c4043;font-weight:normal;letter-spacing:0.07px;">Clicks</div>
<div class="t" style="left:1399.0px;top:936.5px;font-size:16.5px;color:#3c4043;font-weight:normal;letter-spacing:-0.17px;">Day &amp; hour</div>
<div class="t" style="left:1791.9px;top:935.3px;font-size:16.7px;color:#3c4043;font-weight:normal;letter-spacing:0.19px;">Impressions</div>
<div class="t" style="left:1363.5px;top:1002.4px;font-size:19px;color:#202124;font-weight:normal;letter-spacing:0.54px;-webkit-text-stroke:0.35px #202124;">Your performance by day of week and time of day</div>
<div class="t" style="left:1431.8px;top:1067.9px;font-size:19.5px;color:#1a73e8;font-weight:normal;letter-spacing:-0.27px;-webkit-text-stroke:0.35px #1a73e8;">Day</div>
<div class="t" style="left:1615.2px;top:1067.9px;font-size:19.5px;color:#9aa0a6;font-weight:normal;letter-spacing:-0.30px;-webkit-text-stroke:0.35px #9aa0a6;">Day &amp; Hour</div>
<div class="t" style="left:1857.2px;top:1067.9px;font-size:19.5px;color:#9aa0a6;font-weight:normal;letter-spacing:0.28px;-webkit-text-stroke:0.35px #9aa0a6;">Hour</div>
<div class="t" style="left:1166.3px;width:400px;top:1135.5px;font-size:16.5px;color:#5f6368;font-weight:normal;text-align:center;">S</div>
<div class="t" style="left:1166.3px;width:400px;top:1159.5px;font-size:16.5px;color:#5f6368;font-weight:normal;text-align:center;">M</div>
<div class="t" style="left:1166.3px;width:400px;top:1183.5px;font-size:16.5px;color:#5f6368;font-weight:normal;text-align:center;">T</div>
<div class="t" style="left:1166.3px;width:400px;top:1207.5px;font-size:16.5px;color:#5f6368;font-weight:normal;text-align:center;">W</div>
<div class="t" style="left:1166.3px;width:400px;top:1231.5px;font-size:16.5px;color:#5f6368;font-weight:normal;text-align:center;">T</div>
<div class="t" style="left:1166.3px;width:400px;top:1254.5px;font-size:16.5px;color:#5f6368;font-weight:normal;text-align:center;">F</div>
<div class="t" style="left:1166.3px;width:400px;top:1278.5px;font-size:16.5px;color:#5f6368;font-weight:normal;text-align:center;">S</div>
<div class="t" style="left:66.3px;top:1002.5px;font-size:16.5px;color:#3c4043;font-weight:normal;letter-spacing:0.09px;">Biggest changes</div>
<div class="t" style="left:515.9px;top:1001.0px;font-size:17px;color:#3c4043;font-weight:normal;letter-spacing:0.07px;">Cost</div>
<div class="t" style="left:28.7px;top:1067.3px;font-size:19px;color:#202124;font-weight:normal;letter-spacing:0.49px;-webkit-text-stroke:0.35px #202124;">Biggest changes to your campaigns and ad groups</div>
<div class="t" style="left:29.9px;top:1108.7px;font-size:17.4px;color:#5f6368;font-weight:normal;letter-spacing:-0.22px;">Jan 1, 2019 – Jan 9, 2025 compared to Dec 22, 2012 – Dec 31, 2018</div>
<div class="t" style="left:56.1px;top:1158.0px;font-size:17px;color:#3c4043;font-weight:normal;letter-spacing:-0.37px;">QC Kinetix - South Flo…</div>
<div class="t" style="left:56.4px;top:1177.0px;font-size:17px;color:#1a73e8;font-weight:normal;letter-spacing:-0.07px;">services - south florida …</div>
<div class="t" style="right:1362.0px;top:1158.0px;font-size:14.7px;color:#3c4043;font-weight:normal;text-align:right;letter-spacing:-0.62px;">+$267,787.42</div>
<div class="t" style="right:1361.4px;top:1179.3px;font-size:15.5px;color:#3c4043;font-weight:normal;text-align:right;letter-spacing:0.62px;">+∞</div>
<div class="t" style="left:56.6px;top:1221.0px;font-size:17px;color:#9aa0a6;font-weight:normal;letter-spacing:-0.30px;">{inactive} QC Kinetix - …</div>
<div class="t" style="left:56.4px;top:1241.0px;font-size:17px;color:#9aa0a6;font-weight:normal;letter-spacing:-0.16px;">services - charlotte - se…</div>
<div class="t" style="right:1362.1px;top:1222.0px;font-size:14.7px;color:#3c4043;font-weight:normal;text-align:right;letter-spacing:-0.64px;">+$219,164.73</div>
<div class="t" style="right:1361.4px;top:1243.3px;font-size:15.5px;color:#3c4043;font-weight:normal;text-align:right;letter-spacing:0.62px;">+∞</div>
<div class="t" style="left:56.6px;top:1285.0px;font-size:17px;color:#9aa0a6;font-weight:normal;letter-spacing:-0.30px;">{inactive} QC Kinetix - …</div>
<div class="t" style="left:56.4px;top:1304.0px;font-size:17px;color:#9aa0a6;font-weight:normal;letter-spacing:-0.22px;">services - chicago - se…</div>
<div class="t" style="right:1362.1px;top:1285.0px;font-size:14.7px;color:#3c4043;font-weight:normal;text-align:right;letter-spacing:-0.63px;">+$201,875.99</div>
<div class="t" style="right:1361.4px;top:1307.3px;font-size:15.5px;color:#3c4043;font-weight:normal;text-align:right;letter-spacing:0.62px;">+∞</div>
<div class="t" style="left:56.6px;top:1348.0px;font-size:17px;color:#9aa0a6;font-weight:normal;letter-spacing:-0.30px;">{inactive} QC Kinetix - …</div>
<div class="t" style="left:56.4px;top:1368.0px;font-size:17px;color:#9aa0a6;font-weight:normal;letter-spacing:-0.09px;">services - tampa - se…</div>
<div class="t" style="right:1362.0px;top:1348.0px;font-size:14.7px;color:#3c4043;font-weight:normal;text-align:right;letter-spacing:-0.62px;">+$184,501.27</div>
<div class="t" style="right:1361.4px;top:1370.3px;font-size:15.5px;color:#3c4043;font-weight:normal;text-align:right;letter-spacing:0.62px;">+∞</div>
<div class="t" style="left:732.7px;top:1104.5px;font-size:16.5px;color:#3c4043;font-weight:normal;letter-spacing:0.11px;">Measure conversions</div>
<div class="t" style="left:742.0px;top:1170.2px;font-size:19.2px;color:#202124;font-weight:normal;letter-spacing:0.41px;-webkit-text-stroke:0.35px #202124;">A conversion action has been created, but the tag is not yet</div>
<div class="t" style="left:741.9px;top:1196.2px;font-size:19.2px;color:#202124;font-weight:normal;letter-spacing:0.82px;-webkit-text-stroke:0.35px #202124;">verified for:</div>
<div class="t" style="left:856.3px;top:1196.2px;font-size:19.2px;color:#1a73e8;font-weight:normal;letter-spacing:0.89px;">Appointiv</div>
<div class="t" style="left:520.0px;width:400px;top:1245.2px;font-size:18px;color:#fff;font-weight:normal;text-align:center;">2</div>
<div class="t" style="left:743.6px;top:1244.2px;font-size:19.2px;color:#202124;font-weight:normal;letter-spacing:0.57px;-webkit-text-stroke:0.35px #202124;">Add the tracking code to your website</div>
<div class="t" style="left:739.0px;top:1280.7px;font-size:18.6px;color:#3c4043;font-weight:normal;letter-spacing:0.21px;">To complete setup, you&#x27;ll need to add the tracking code to your</div>
<div class="t" style="left:739.4px;top:1306.7px;font-size:18.6px;color:#3c4043;font-weight:normal;letter-spacing:0.36px;">website</div>
</div>
</body></html>
